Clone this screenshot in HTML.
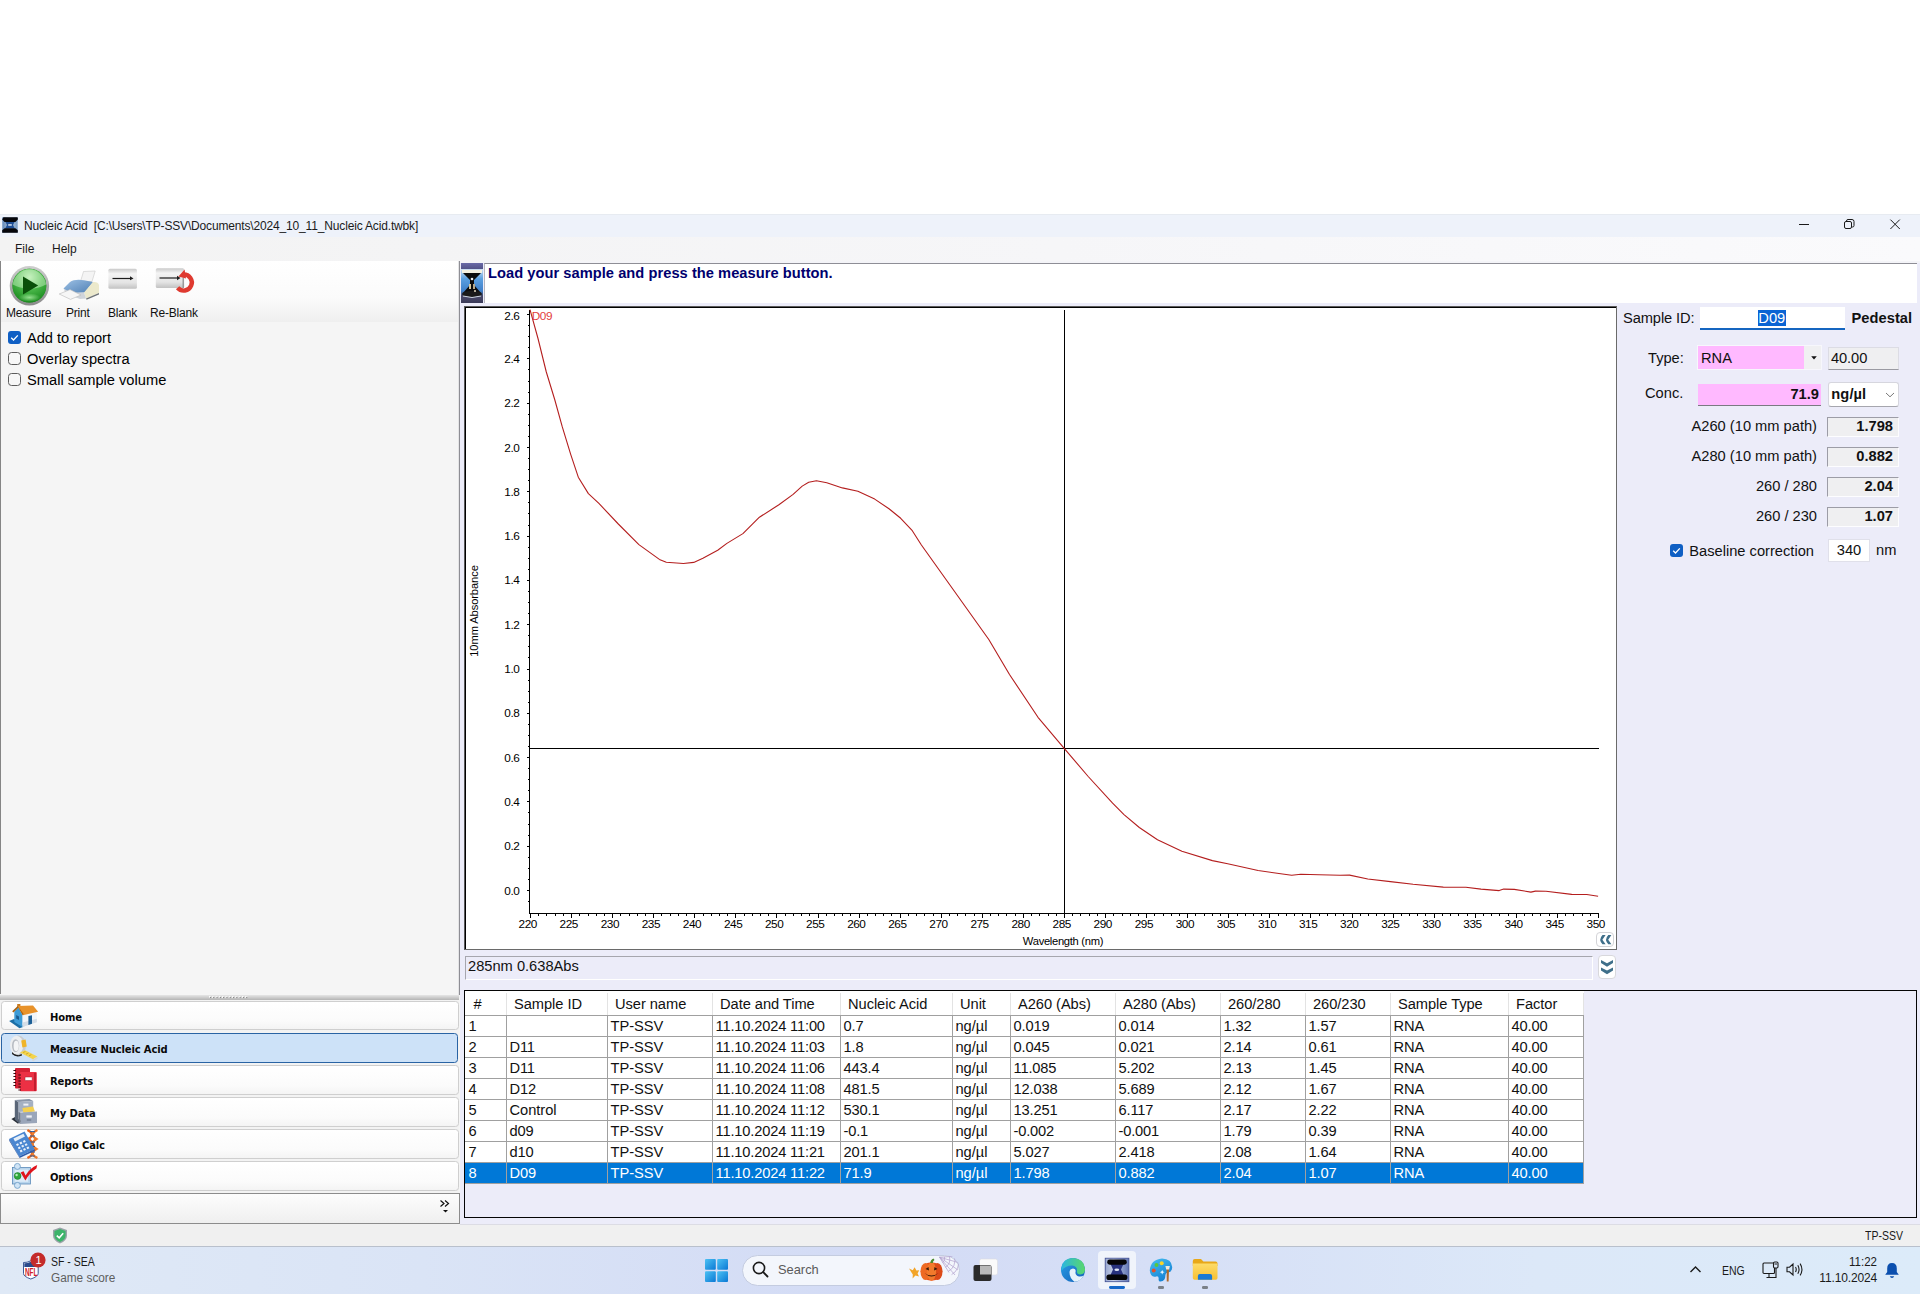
<!DOCTYPE html>
<html><head><meta charset="utf-8"><title>Nucleic Acid</title>
<style>
html,body{margin:0;padding:0;background:#fff;}
body{width:1920px;height:1312px;position:relative;overflow:hidden;font-family:"Liberation Sans",sans-serif;}
.b{position:absolute;box-sizing:border-box;}
.t{position:absolute;white-space:pre;}
svg{position:absolute;overflow:visible;}
</style></head><body>
<div class="b" style="left:0px;top:214px;width:1920px;height:23px;background:#eef2fa;border-top:1px solid #e7ebf1;"></div>
<div class="b" style="left:0px;top:237px;width:1920px;height:24px;background:linear-gradient(90deg,#f3f3f3 0%,#f4f4f5 22%,#f6f6f8 55%,#fafafc 100%);"></div>
<svg style="left:2px;top:217px" width="16" height="16" viewBox="0 0 16 16"><defs><linearGradient id="gti" x1="0" y1="0" x2="1" y2="0"><stop offset="0" stop-color="#5f86b8"/><stop offset="0.5" stop-color="#b4c8dc"/><stop offset="1" stop-color="#7a9cc4"/></linearGradient></defs><rect x="0.3" y="0.3" width="15.4" height="15.4" fill="url(#gti)"/><path d="M3.2 4.6H12.8L11 8L12.8 11.4H3.2L5 8Z" fill="#1f4f96"/><path d="M1.4 0.2H15.2Q15.8 0.2 15.8 0.9V2.6L13.4 5H2.6L0.2 2.6Z" fill="#06060a"/><path d="M2.6 11.2H13.4L15.8 13.2V15.2Q15.8 15.8 15.2 15.8H0.8Q0.2 15.8 0.2 15.2V13.2Z" fill="#06060a"/><rect x="6.2" y="7.2" width="3.6" height="1.5" fill="#dfe8f4"/></svg>
<span class="t" style="left:24px;top:218.14px;font-size:12px;line-height:16px;color:#1a1a1a;letter-spacing:-0.16px;">Nucleic Acid  [C:\Users\TP-SSV\Documents\2024_10_11_Nucleic Acid.twbk]</span>
<svg style="left:1790px;top:214px" width="130" height="23" viewBox="0 0 130 23"><g stroke="#1a1a1a" stroke-width="1" fill="none"><path d="M9 10.5H19"/><rect x="54.5" y="7.5" width="7" height="7" rx="1.5"/><path d="M56.5 7.5V7a1.5 1.5 0 0 1 1.5-1.5h4a2 2 0 0 1 2 2v4a1.5 1.5 0 0 1-1.5 1.5H62"/><path d="M100.4 5.6L109.8 15M109.8 5.6L100.4 15"/></g></svg>
<span class="t" style="left:15px;top:240.84px;font-size:12px;line-height:16px;color:#1a1a1a;">File</span>
<span class="t" style="left:52px;top:240.84px;font-size:12px;line-height:16px;color:#1a1a1a;">Help</span>
<div class="b" style="left:0px;top:261px;width:460px;height:963px;background:#f5f5f5;"></div>
<div class="b" style="left:0px;top:261px;width:460px;height:61px;background:linear-gradient(180deg,#ffffff 0%,#fbfbfb 60%,#efefef 100%);"></div>
<div class="b" style="left:0px;top:261px;width:1px;height:733px;background:#858585;"></div>
<div class="b" style="left:458px;top:261px;width:1px;height:734px;background:#e4e4e6;"></div>
<div class="b" style="left:459px;top:261px;width:1px;height:734px;background:#8e8e94;"></div>
<span class="t" style="left:6px;top:304.84px;font-size:12px;line-height:16px;color:#111;letter-spacing:-0.2px;">Measure</span>
<span class="t" style="left:66px;top:304.84px;font-size:12px;line-height:16px;color:#111;letter-spacing:-0.2px;">Print</span>
<span class="t" style="left:108px;top:304.84px;font-size:12px;line-height:16px;color:#111;letter-spacing:-0.2px;">Blank</span>
<span class="t" style="left:150px;top:304.84px;font-size:12px;line-height:16px;color:#111;letter-spacing:-0.2px;">Re-Blank</span>
<svg style="left:8px;top:331px" width="13" height="13" viewBox="0 0 13 13"><rect x="0" y="0" width="13" height="13" rx="3" fill="#0f5fc4"/><path d="M3.2 6.8L5.5 9L9.8 4.4" stroke="#fff" stroke-width="1.3" fill="none"/></svg>
<svg style="left:8px;top:352px" width="13" height="13" viewBox="0 0 13 13"><rect x="0.5" y="0.5" width="12" height="12" rx="3" fill="#f7f7f7" stroke="#5c5c5c"/></svg>
<svg style="left:8px;top:373px" width="13" height="13" viewBox="0 0 13 13"><rect x="0.5" y="0.5" width="12" height="12" rx="3" fill="#f7f7f7" stroke="#5c5c5c"/></svg>
<span class="t" style="left:27px;top:329.42px;font-size:14.67px;line-height:19px;color:#000;letter-spacing:-0.06px;">Add to report</span>
<span class="t" style="left:27px;top:350.42px;font-size:14.67px;line-height:19px;color:#000;">Overlay spectra</span>
<span class="t" style="left:27px;top:371.42px;font-size:14.67px;line-height:19px;color:#000;">Small sample volume</span>
<div class="b" style="left:460px;top:261px;width:1460px;height:963px;background:#ececf9;"></div>
<div class="b" style="left:460px;top:261px;width:1460px;height:2px;background:#f4f4f8;"></div>
<div class="b" style="left:484px;top:263px;width:1433px;height:40px;background:#fff;border-top:1px solid #8e8e96;border-left:1px solid #b5b5bd;"></div>
<div class="b" style="left:461px;top:263px;width:22px;height:40px;background:linear-gradient(180deg,#6a6aa8 0%,#54548a 14%,#cfe0f2 15%,#5a9fe0 40%,#3f7fc8 70%,#4a4a6a 82%,#3a3a58 100%);"></div>
<svg style="left:461px;top:263px" width="22" height="40" viewBox="0 0 22 40"><rect x="1" y="7" width="20" height="3" fill="#f4f0e0"/><path d="M2 10H20L13 17V22L20 30V33H2V30L9 22V17Z" fill="#0c0c0c"/><ellipse cx="11" cy="31" rx="10" ry="3.2" fill="#1a1a1a"/><rect x="8" y="21" width="2" height="5" fill="#d8c8a0"/><rect x="12" y="21" width="2" height="5" fill="#b8a888"/><circle cx="11" cy="16" r="1.3" fill="#eee"/><circle cx="14" cy="28" r="1" fill="#e8dcc0"/><path d="M2 33 Q11 36 20 33" stroke="#cfd8e4" fill="none"/></svg>
<span class="t" style="left:488px;top:263.92px;font-size:14.67px;line-height:19px;color:#00006e;font-weight:bold;letter-spacing:0.04px;">Load your sample and press the measure button.</span>
<svg style="left:0px;top:261px" width="220" height="50" viewBox="0 261 220 50">
<defs>
<radialGradient id="gplay" cx="0.5" cy="0.25" r="0.8"><stop offset="0" stop-color="#b8ecb0"/><stop offset="0.5" stop-color="#46b446"/><stop offset="1" stop-color="#138418"/></radialGradient>
<radialGradient id="gglow" cx="0.5" cy="0.5" r="0.5"><stop offset="0" stop-color="#b4f4ac" stop-opacity="0.75"/><stop offset="1" stop-color="#b4f4ac" stop-opacity="0"/></radialGradient><linearGradient id="gring" x1="0" y1="0" x2="0" y2="1"><stop offset="0" stop-color="#cfcfcf"/><stop offset="1" stop-color="#8a8a8a"/></linearGradient>
<linearGradient id="gblank" x1="0" y1="0" x2="0" y2="1"><stop offset="0" stop-color="#c9c9c9"/><stop offset="0.25" stop-color="#f4f4f4"/><stop offset="0.7" stop-color="#e4e4e4"/><stop offset="1" stop-color="#c2c2c2"/></linearGradient>
<linearGradient id="gprb" x1="0" y1="0" x2="1" y2="1"><stop offset="0" stop-color="#9cc0e4"/><stop offset="1" stop-color="#4f7fb4"/></linearGradient>
</defs>
<circle cx="29.4" cy="285.7" r="19.7" fill="url(#gring)"/>
<circle cx="29.4" cy="285.7" r="16.9" fill="#1f8a24"/>
<circle cx="29.4" cy="285.7" r="16.9" fill="url(#gplay)"/>
<path d="M12.8 284.5A16.7 16.7 0 0 1 46 284.5Q38 289 29.4 288.5Q21 289 12.8 284.5Z" fill="#d8f8d0" opacity="0.45"/>
<ellipse cx="29.4" cy="297.5" rx="11" ry="4.2" fill="url(#gglow)"/>
<path d="M23 276.6L38.2 285.6L23 294.4Z" fill="#0a4f0a"/>
<!-- printer -->
<path d="M83.5 271.5L95.2 271L92 281.5L80.5 281.5Z" fill="#f4f4f4" stroke="#c8c8c8" stroke-width="0.6"/>
<path d="M63.5 288.5L70 282Q74 279 84 280.2L93 282L85 292.5L70 293Z" fill="url(#gprb)"/>
<path d="M84 292.5L93 282Q98 281.5 99 285V293L86 298.6Z" fill="#ece9cc"/>
<path d="M86 298.6L99 293V294.6L86.6 299.8Z" fill="#6f7478"/>
<path d="M63.5 288.5L70 293L84 292.5L86 298.6L80 299L66 294Z" fill="#cfd4da"/>
<path d="M59.2 294L70 289.6L81 295L70.5 299.4Z" fill="#f6f6f6" stroke="#b8b8b8" stroke-width="0.6"/>
<!-- blank -->
<rect x="108.4" y="268.8" width="28.5" height="20" rx="1.5" fill="url(#gblank)"/>
<path d="M112.5 278.5H131" stroke="#1c1c1c" stroke-width="1.2"/><path d="M130 276.3L133.5 278.5L130 280.2Z" fill="#1c1c1c"/>
<!-- re-blank -->
<rect x="155.8" y="268.2" width="28.4" height="19.8" rx="1.5" fill="url(#gblank)"/>
<path d="M183.2 277.5V288" stroke="#8a8a8a" stroke-width="1.2"/>
<path d="M159.5 278H178" stroke="#1c1c1c" stroke-width="1.2"/><path d="M177 275.8L180.5 278L177 280.2Z" fill="#1c1c1c"/>
<path d="M183.4 274.4A8.1 8.1 0 1 1 177.6 287.8" fill="none" stroke="#df3a30" stroke-width="4.4"/>
<path d="M178.4 276.6L184.6 269.6L186 278.4Z" fill="#df3a30"/>
</svg>
<span class="t" style="left:1623px;top:309.02px;font-size:14.67px;line-height:19px;color:#111;letter-spacing:-0.1px;">Sample ID:</span>
<div class="b" style="left:1700px;top:307px;width:145px;height:22.5px;background:#fff;border-bottom:2px solid #1565c0;"></div>
<div class="b" style="left:1758px;top:309.5px;width:28px;height:16px;background:#0a64d4;"></div>
<span class="t" style="left:1758.3px;top:308.82px;font-size:14.67px;line-height:19px;color:#fff;">D09</span>
<span class="t" style="left:1851.5px;top:309.02px;font-size:14.67px;line-height:19px;color:#111;font-weight:bold;letter-spacing:0.05px;">Pedestal</span>
<span class="t" style="left:1648px;top:349.02px;font-size:14.67px;line-height:19px;color:#111;letter-spacing:0;">Type:</span>
<div class="b" style="left:1697px;top:345px;width:125px;height:25px;background:#f7f7fc;"></div>
<div class="b" style="left:1698px;top:346px;width:106px;height:23px;background:#ffb9ff;"></div>
<div class="b" style="left:1804px;top:346px;width:17px;height:23px;background:#f0f0f2;"></div>
<svg style="left:1810.5px;top:356px" width="6" height="4" viewBox="0 0 6 4"><path d="M0.2 0.3H5.8L3 3.4Z" fill="#111"/></svg>
<span class="t" style="left:1701px;top:349.02px;font-size:14.67px;line-height:19px;color:#111;letter-spacing:0;">RNA</span>
<div class="b" style="left:1828px;top:347px;width:71px;height:22.5px;background:#efeff1;border:1px solid #dcdce4;border-bottom:1px solid #9a9aa2;"></div>
<span class="t" style="left:1831px;top:349.02px;font-size:14.67px;line-height:19px;color:#111;letter-spacing:-0.1px;">40.00</span>
<span class="t" style="left:1645px;top:384.42px;font-size:14.67px;line-height:19px;color:#111;letter-spacing:0;">Conc.</span>
<div class="b" style="left:1698px;top:384px;width:122.5px;height:21.5px;background:#ffb9ff;border-bottom:1px solid #7a7a82;"></div>
<span class="t" style="left:1698px;top:384.72px;font-size:14.67px;line-height:19px;color:#111;font-weight:bold;width:121px;text-align:right;letter-spacing:0;">71.9</span>
<div class="b" style="left:1827.5px;top:381.5px;width:71px;height:25px;background:#fff;border:1px solid #d6d6de;border-bottom:1px solid #a6a6ae;border-radius:3px;"></div>
<span class="t" style="left:1831.3px;top:385.02px;font-size:14.67px;line-height:19px;color:#111;font-weight:bold;letter-spacing:0.1px;">ng/µl</span>
<svg style="left:1885px;top:392px" width="10" height="6" viewBox="0 0 10 6"><path d="M1 1L5 4.8L9 1" stroke="#6a6a6a" stroke-width="0.9" fill="none"/></svg>
<div class="b" style="left:1827px;top:417px;width:72px;height:20px;background:#efeff1;border:1px solid #9c9ca6;border-right-color:#fdfdff;border-bottom-color:#fdfdff;"></div>
<span class="t" style="left:1600px;top:417.22px;font-size:14.67px;line-height:19px;color:#111;width:217px;text-align:right;letter-spacing:0;">A260 (10 mm path)</span>
<span class="t" style="left:1827px;top:417.42px;font-size:14.67px;line-height:19px;color:#111;font-weight:bold;width:66px;text-align:right;letter-spacing:0;">1.798</span>
<div class="b" style="left:1827px;top:447px;width:72px;height:20px;background:#efeff1;border:1px solid #9c9ca6;border-right-color:#fdfdff;border-bottom-color:#fdfdff;"></div>
<span class="t" style="left:1600px;top:447.22px;font-size:14.67px;line-height:19px;color:#111;width:217px;text-align:right;letter-spacing:0;">A280 (10 mm path)</span>
<span class="t" style="left:1827px;top:447.42px;font-size:14.67px;line-height:19px;color:#111;font-weight:bold;width:66px;text-align:right;letter-spacing:0;">0.882</span>
<div class="b" style="left:1827px;top:477px;width:72px;height:20px;background:#efeff1;border:1px solid #9c9ca6;border-right-color:#fdfdff;border-bottom-color:#fdfdff;"></div>
<span class="t" style="left:1600px;top:477.22px;font-size:14.67px;line-height:19px;color:#111;width:217px;text-align:right;letter-spacing:0;">260 / 280</span>
<span class="t" style="left:1827px;top:477.42px;font-size:14.67px;line-height:19px;color:#111;font-weight:bold;width:66px;text-align:right;letter-spacing:0;">2.04</span>
<div class="b" style="left:1827px;top:507px;width:72px;height:20px;background:#efeff1;border:1px solid #9c9ca6;border-right-color:#fdfdff;border-bottom-color:#fdfdff;"></div>
<span class="t" style="left:1600px;top:507.22px;font-size:14.67px;line-height:19px;color:#111;width:217px;text-align:right;letter-spacing:0;">260 / 230</span>
<span class="t" style="left:1827px;top:507.42px;font-size:14.67px;line-height:19px;color:#111;font-weight:bold;width:66px;text-align:right;letter-spacing:0;">1.07</span>
<svg style="left:1670px;top:544px" width="13" height="13" viewBox="0 0 13 13"><rect x="0" y="0" width="13" height="13" rx="3" fill="#0f5fc4"/><path d="M3.2 6.8L5.5 9L9.8 4.4" stroke="#fff" stroke-width="1.3" fill="none"/></svg>
<span class="t" style="left:1689.3px;top:542.02px;font-size:14.67px;line-height:19px;color:#111;letter-spacing:0;">Baseline correction</span>
<div class="b" style="left:1828px;top:539px;width:42px;height:23px;background:#fff;border:1px solid #e0e0ea;"></div>
<span class="t" style="left:1828px;top:541.12px;font-size:14.67px;line-height:19px;color:#111;width:42px;text-align:center;letter-spacing:0;">340</span>
<span class="t" style="left:1876px;top:541.12px;font-size:14.67px;line-height:19px;color:#111;letter-spacing:0;">nm</span>
<div class="b" style="left:464px;top:306px;width:1153px;height:644px;background:#000;border-top:1px solid #5a5a5a;border-left:1px solid #5a5a5a;border-right:1px solid #6a6a6a;border-bottom:1px solid #6a6a6a;"></div>
<div class="b" style="left:466px;top:308px;width:1150px;height:641px;background:#fff;"></div>
<svg style="left:0;top:0" width="1920" height="1312" viewBox="0 0 1920 1312" shape-rendering="crispEdges"><g stroke="#000" stroke-width="1" fill="none"><path d="M529.5 310V913.5H1599"/><path d="M527.5 901.5H529M526.5 890.5H529M527.5 879.5H529M527.5 868.5H529M527.5 857.5H529M526.5 846.5H529M527.5 835.5H529M527.5 824.5H529M527.5 812.5H529M526.5 801.5H529M527.5 790.5H529M527.5 779.5H529M527.5 768.5H529M526.5 757.5H529M527.5 746.5H529M527.5 735.5H529M527.5 724.5H529M526.5 713.5H529M527.5 702.5H529M527.5 691.5H529M527.5 680.5H529M526.5 669.5H529M527.5 657.5H529M527.5 646.5H529M527.5 635.5H529M526.5 624.5H529M527.5 613.5H529M527.5 602.5H529M527.5 591.5H529M526.5 580.5H529M527.5 569.5H529M527.5 558.5H529M527.5 547.5H529M526.5 536.5H529M527.5 525.5H529M527.5 513.5H529M527.5 502.5H529M526.5 491.5H529M527.5 480.5H529M527.5 469.5H529M527.5 458.5H529M526.5 447.5H529M527.5 436.5H529M527.5 425.5H529M527.5 414.5H529M526.5 403.5H529M527.5 392.5H529M527.5 381.5H529M527.5 369.5H529M526.5 358.5H529M527.5 347.5H529M527.5 336.5H529M527.5 325.5H529M526.5 314.5H529"/><path d="M530.5 913V918M538.5 913V916M546.5 913V916M555.5 913V916M563.5 913V916M571.5 913V918M579.5 913V916M588.5 913V916M596.5 913V916M604.5 913V916M612.5 913V918M620.5 913V916M629.5 913V916M637.5 913V916M645.5 913V916M653.5 913V918M661.5 913V916M670.5 913V916M678.5 913V916M686.5 913V916M694.5 913V918M703.5 913V916M711.5 913V916M719.5 913V916M727.5 913V916M735.5 913V918M744.5 913V916M752.5 913V916M760.5 913V916M768.5 913V916M776.5 913V918M785.5 913V916M793.5 913V916M801.5 913V916M809.5 913V916M818.5 913V918M826.5 913V916M834.5 913V916M842.5 913V916M850.5 913V916M859.5 913V918M867.5 913V916M875.5 913V916M883.5 913V916M891.5 913V916M900.5 913V918M908.5 913V916M916.5 913V916M924.5 913V916M933.5 913V916M941.5 913V918M949.5 913V916M957.5 913V916M965.5 913V916M974.5 913V916M982.5 913V918M990.5 913V916M998.5 913V916M1006.5 913V916M1015.5 913V916M1023.5 913V918M1031.5 913V916M1039.5 913V916M1048.5 913V916M1056.5 913V916M1064.5 913V918M1072.5 913V916M1080.5 913V916M1089.5 913V916M1097.5 913V916M1105.5 913V918M1113.5 913V916M1122.5 913V916M1130.5 913V916M1138.5 913V916M1146.5 913V918M1154.5 913V916M1163.5 913V916M1171.5 913V916M1179.5 913V916M1187.5 913V918M1195.5 913V916M1204.5 913V916M1212.5 913V916M1220.5 913V916M1228.5 913V918M1237.5 913V916M1245.5 913V916M1253.5 913V916M1261.5 913V916M1269.5 913V918M1278.5 913V916M1286.5 913V916M1294.5 913V916M1302.5 913V916M1310.5 913V918M1319.5 913V916M1327.5 913V916M1335.5 913V916M1343.5 913V916M1352.5 913V918M1360.5 913V916M1368.5 913V916M1376.5 913V916M1384.5 913V916M1393.5 913V918M1401.5 913V916M1409.5 913V916M1417.5 913V916M1425.5 913V916M1434.5 913V918M1442.5 913V916M1450.5 913V916M1458.5 913V916M1467.5 913V916M1475.5 913V918M1483.5 913V916M1491.5 913V916M1499.5 913V916M1508.5 913V916M1516.5 913V918M1524.5 913V916M1532.5 913V916M1540.5 913V916M1549.5 913V916M1557.5 913V918M1565.5 913V916M1573.5 913V916M1582.5 913V916M1590.5 913V916M1598.5 913V918"/><path d="M1064.5 310V913M530 748.5H1599"/></g></svg>
<svg style="left:0;top:0" width="1920" height="1312" viewBox="0 0 1920 1312"><path d="M530.0 309.6 L538.0 338.5 L546.3 372.0 L554.7 399.5 L562.3 426.9 L570.7 454.3 L578.3 477.2 L588.4 493.6 L598.9 503.4 L618.3 524.0 L638.9 544.6 L659.4 559.4 L666.3 562.2 L683.4 563.5 L693.7 562.4 L702.9 558.3 L717.7 550.3 L726.9 543.4 L742.9 533.6 L759.4 517.2 L778.9 504.8 L793.1 494.4 L802.2 486.1 L808.7 482.2 L816.4 480.7 L826.8 482.8 L842.4 487.9 L857.9 491.3 L874.7 499.1 L889.0 508.7 L900.7 518.3 L912.3 530.7 L921.4 545.0 L988.8 639.5 L1009.5 674.5 L1038.0 717.3 L1064.4 748.6 L1088.2 776.5 L1112.6 803.2 L1124.0 814.6 L1139.3 827.5 L1157.5 839.7 L1181.9 851.2 L1212.4 860.6 L1227.7 863.7 L1258.1 870.5 L1282.5 874.0 L1291.7 875.3 L1300.8 874.2 L1319.1 874.8 L1340.0 875.3 L1349.6 875.1 L1367.8 879.0 L1390.4 881.6 L1413.1 884.3 L1443.3 887.1 L1465.9 887.3 L1481.0 889.1 L1499.2 890.6 L1503.7 889.1 L1514.3 889.4 L1530.9 892.1 L1535.4 891.1 L1546.0 891.2 L1571.7 894.4 L1586.8 894.5 L1598.1 896.2" stroke="#b41e1e" stroke-width="1.1" fill="none" stroke-linejoin="round"/></svg>
<span class="t" style="left:489.4px;top:883.51px;font-size:11.8px;line-height:15px;color:#000;width:30px;text-align:right;letter-spacing:-0.45px;">0.0</span>
<span class="t" style="left:489.4px;top:839.21px;font-size:11.8px;line-height:15px;color:#000;width:30px;text-align:right;letter-spacing:-0.45px;">0.2</span>
<span class="t" style="left:489.4px;top:794.91px;font-size:11.8px;line-height:15px;color:#000;width:30px;text-align:right;letter-spacing:-0.45px;">0.4</span>
<span class="t" style="left:489.4px;top:750.61px;font-size:11.8px;line-height:15px;color:#000;width:30px;text-align:right;letter-spacing:-0.45px;">0.6</span>
<span class="t" style="left:489.4px;top:706.31px;font-size:11.8px;line-height:15px;color:#000;width:30px;text-align:right;letter-spacing:-0.45px;">0.8</span>
<span class="t" style="left:489.4px;top:662.01px;font-size:11.8px;line-height:15px;color:#000;width:30px;text-align:right;letter-spacing:-0.45px;">1.0</span>
<span class="t" style="left:489.4px;top:617.71px;font-size:11.8px;line-height:15px;color:#000;width:30px;text-align:right;letter-spacing:-0.45px;">1.2</span>
<span class="t" style="left:489.4px;top:573.41px;font-size:11.8px;line-height:15px;color:#000;width:30px;text-align:right;letter-spacing:-0.45px;">1.4</span>
<span class="t" style="left:489.4px;top:529.11px;font-size:11.8px;line-height:15px;color:#000;width:30px;text-align:right;letter-spacing:-0.45px;">1.6</span>
<span class="t" style="left:489.4px;top:484.81px;font-size:11.8px;line-height:15px;color:#000;width:30px;text-align:right;letter-spacing:-0.45px;">1.8</span>
<span class="t" style="left:489.4px;top:440.51px;font-size:11.8px;line-height:15px;color:#000;width:30px;text-align:right;letter-spacing:-0.45px;">2.0</span>
<span class="t" style="left:489.4px;top:396.21px;font-size:11.8px;line-height:15px;color:#000;width:30px;text-align:right;letter-spacing:-0.45px;">2.2</span>
<span class="t" style="left:489.4px;top:351.91px;font-size:11.8px;line-height:15px;color:#000;width:30px;text-align:right;letter-spacing:-0.45px;">2.4</span>
<span class="t" style="left:489.4px;top:309.21px;font-size:11.8px;line-height:15px;color:#000;width:30px;text-align:right;letter-spacing:-0.45px;">2.6</span>
<span class="t" style="left:507.70000000000005px;top:916.91px;font-size:11.8px;line-height:15px;color:#000;width:40px;text-align:center;letter-spacing:-0.45px;">220</span>
<span class="t" style="left:548.777px;top:916.91px;font-size:11.8px;line-height:15px;color:#000;width:40px;text-align:center;letter-spacing:-0.45px;">225</span>
<span class="t" style="left:589.854px;top:916.91px;font-size:11.8px;line-height:15px;color:#000;width:40px;text-align:center;letter-spacing:-0.45px;">230</span>
<span class="t" style="left:630.931px;top:916.91px;font-size:11.8px;line-height:15px;color:#000;width:40px;text-align:center;letter-spacing:-0.45px;">235</span>
<span class="t" style="left:672.008px;top:916.91px;font-size:11.8px;line-height:15px;color:#000;width:40px;text-align:center;letter-spacing:-0.45px;">240</span>
<span class="t" style="left:713.085px;top:916.91px;font-size:11.8px;line-height:15px;color:#000;width:40px;text-align:center;letter-spacing:-0.45px;">245</span>
<span class="t" style="left:754.162px;top:916.91px;font-size:11.8px;line-height:15px;color:#000;width:40px;text-align:center;letter-spacing:-0.45px;">250</span>
<span class="t" style="left:795.239px;top:916.91px;font-size:11.8px;line-height:15px;color:#000;width:40px;text-align:center;letter-spacing:-0.45px;">255</span>
<span class="t" style="left:836.316px;top:916.91px;font-size:11.8px;line-height:15px;color:#000;width:40px;text-align:center;letter-spacing:-0.45px;">260</span>
<span class="t" style="left:877.393px;top:916.91px;font-size:11.8px;line-height:15px;color:#000;width:40px;text-align:center;letter-spacing:-0.45px;">265</span>
<span class="t" style="left:918.47px;top:916.91px;font-size:11.8px;line-height:15px;color:#000;width:40px;text-align:center;letter-spacing:-0.45px;">270</span>
<span class="t" style="left:959.547px;top:916.91px;font-size:11.8px;line-height:15px;color:#000;width:40px;text-align:center;letter-spacing:-0.45px;">275</span>
<span class="t" style="left:1000.624px;top:916.91px;font-size:11.8px;line-height:15px;color:#000;width:40px;text-align:center;letter-spacing:-0.45px;">280</span>
<span class="t" style="left:1041.7010000000002px;top:916.91px;font-size:11.8px;line-height:15px;color:#000;width:40px;text-align:center;letter-spacing:-0.45px;">285</span>
<span class="t" style="left:1082.778px;top:916.91px;font-size:11.8px;line-height:15px;color:#000;width:40px;text-align:center;letter-spacing:-0.45px;">290</span>
<span class="t" style="left:1123.8550000000002px;top:916.91px;font-size:11.8px;line-height:15px;color:#000;width:40px;text-align:center;letter-spacing:-0.45px;">295</span>
<span class="t" style="left:1164.932px;top:916.91px;font-size:11.8px;line-height:15px;color:#000;width:40px;text-align:center;letter-spacing:-0.45px;">300</span>
<span class="t" style="left:1206.0090000000002px;top:916.91px;font-size:11.8px;line-height:15px;color:#000;width:40px;text-align:center;letter-spacing:-0.45px;">305</span>
<span class="t" style="left:1247.086px;top:916.91px;font-size:11.8px;line-height:15px;color:#000;width:40px;text-align:center;letter-spacing:-0.45px;">310</span>
<span class="t" style="left:1288.1630000000002px;top:916.91px;font-size:11.8px;line-height:15px;color:#000;width:40px;text-align:center;letter-spacing:-0.45px;">315</span>
<span class="t" style="left:1329.24px;top:916.91px;font-size:11.8px;line-height:15px;color:#000;width:40px;text-align:center;letter-spacing:-0.45px;">320</span>
<span class="t" style="left:1370.3170000000002px;top:916.91px;font-size:11.8px;line-height:15px;color:#000;width:40px;text-align:center;letter-spacing:-0.45px;">325</span>
<span class="t" style="left:1411.394px;top:916.91px;font-size:11.8px;line-height:15px;color:#000;width:40px;text-align:center;letter-spacing:-0.45px;">330</span>
<span class="t" style="left:1452.4710000000002px;top:916.91px;font-size:11.8px;line-height:15px;color:#000;width:40px;text-align:center;letter-spacing:-0.45px;">335</span>
<span class="t" style="left:1493.548px;top:916.91px;font-size:11.8px;line-height:15px;color:#000;width:40px;text-align:center;letter-spacing:-0.45px;">340</span>
<span class="t" style="left:1534.6250000000002px;top:916.91px;font-size:11.8px;line-height:15px;color:#000;width:40px;text-align:center;letter-spacing:-0.45px;">345</span>
<span class="t" style="left:1575.7020000000002px;top:916.91px;font-size:11.8px;line-height:15px;color:#000;width:40px;text-align:center;letter-spacing:-0.45px;">350</span>
<span class="t" style="left:1003px;top:933.62px;font-size:11.2px;line-height:15px;color:#000;width:120px;text-align:center;letter-spacing:-0.3px;">Wavelength (nm)</span>
<span class="t" style="left:474px;top:611px;font-size:11.2px;line-height:14px;letter-spacing:-0.12px;transform:translate(-50%,-50%) rotate(-90deg);color:#000;">10mm Absorbance</span>
<span class="t" style="left:531.8px;top:309.11px;font-size:11.8px;line-height:15px;color:#e23c3c;letter-spacing:-0.45px;">D09</span>
<div class="b" style="left:1596px;top:932px;width:18px;height:15px;background:#fff;border:1px solid #d4d4d8;border-radius:4px;"></div>
<svg style="left:1599px;top:934.6px" width="14" height="10" viewBox="0 0 14 10"><path d="M6.6000000000000005 0L3.5 0Q-1.0 4.65 3.5 9.3L6.6000000000000005 9.3L3.4000000000000004 4.65Z M12.4 0L9.3 0Q4.8 4.65 9.3 9.3L12.4 9.3L9.2 4.65Z" fill="#3f6f8a"/></svg>
<div class="b" style="left:465px;top:956px;width:1128px;height:24px;background:#ececf9;border-top:1px solid #a6a6ae;border-left:1px solid #a6a6ae;border-bottom:1px solid #fff;border-right:1px solid #fff;"></div>
<span class="t" style="left:468px;top:956.92px;font-size:14.67px;line-height:19px;color:#111;">285nm 0.638Abs</span>
<div class="b" style="left:1598px;top:955px;width:18px;height:24px;background:#fff;border:1px solid #d8d8dc;border-radius:4px;"></div>
<svg style="left:1600px;top:959px" width="14" height="16" viewBox="0 0 14 16"><path d="M1 1L7 4.2L13 1V4L7 7.8L1 4Z M1 8.4L7 11.6L13 8.4V11.4L7 15.2L1 11.4Z" fill="#3f6f8a"/></svg>
<div class="b" style="left:464px;top:990px;width:1453px;height:228px;background:#ececf9;border:1px solid #050505;"></div>
<div class="b" style="left:465px;top:991px;width:1119px;height:25px;background:#fff;border-bottom:1px solid #a0a0a0;"></div>
<div class="b" style="left:465px;top:1016px;width:1119px;height:168px;background:#fff;"></div>
<div class="b" style="left:465px;top:1163px;width:1119px;height:21px;background:#0078d7;"></div>
<div class="b" style="left:465px;top:1036px;width:1119px;height:1px;background:#a0a0a0;"></div>
<div class="b" style="left:465px;top:1057px;width:1119px;height:1px;background:#a0a0a0;"></div>
<div class="b" style="left:465px;top:1078px;width:1119px;height:1px;background:#a0a0a0;"></div>
<div class="b" style="left:465px;top:1099px;width:1119px;height:1px;background:#a0a0a0;"></div>
<div class="b" style="left:465px;top:1120px;width:1119px;height:1px;background:#a0a0a0;"></div>
<div class="b" style="left:465px;top:1141px;width:1119px;height:1px;background:#a0a0a0;"></div>
<div class="b" style="left:465px;top:1162px;width:1119px;height:1px;background:#a0a0a0;"></div>
<div class="b" style="left:465px;top:1183px;width:1119px;height:1px;background:#a0a0a0;"></div>
<div class="b" style="left:506px;top:993px;width:1px;height:22px;background:#e3e3e3;"></div>
<div class="b" style="left:506px;top:1016px;width:1px;height:168px;background:#a0a0a0;"></div>
<div class="b" style="left:607px;top:993px;width:1px;height:22px;background:#e3e3e3;"></div>
<div class="b" style="left:607px;top:1016px;width:1px;height:168px;background:#a0a0a0;"></div>
<div class="b" style="left:712px;top:993px;width:1px;height:22px;background:#e3e3e3;"></div>
<div class="b" style="left:712px;top:1016px;width:1px;height:168px;background:#a0a0a0;"></div>
<div class="b" style="left:840px;top:993px;width:1px;height:22px;background:#e3e3e3;"></div>
<div class="b" style="left:840px;top:1016px;width:1px;height:168px;background:#a0a0a0;"></div>
<div class="b" style="left:952px;top:993px;width:1px;height:22px;background:#e3e3e3;"></div>
<div class="b" style="left:952px;top:1016px;width:1px;height:168px;background:#a0a0a0;"></div>
<div class="b" style="left:1010px;top:993px;width:1px;height:22px;background:#e3e3e3;"></div>
<div class="b" style="left:1010px;top:1016px;width:1px;height:168px;background:#a0a0a0;"></div>
<div class="b" style="left:1115px;top:993px;width:1px;height:22px;background:#e3e3e3;"></div>
<div class="b" style="left:1115px;top:1016px;width:1px;height:168px;background:#a0a0a0;"></div>
<div class="b" style="left:1220px;top:993px;width:1px;height:22px;background:#e3e3e3;"></div>
<div class="b" style="left:1220px;top:1016px;width:1px;height:168px;background:#a0a0a0;"></div>
<div class="b" style="left:1305px;top:993px;width:1px;height:22px;background:#e3e3e3;"></div>
<div class="b" style="left:1305px;top:1016px;width:1px;height:168px;background:#a0a0a0;"></div>
<div class="b" style="left:1390px;top:993px;width:1px;height:22px;background:#e3e3e3;"></div>
<div class="b" style="left:1390px;top:1016px;width:1px;height:168px;background:#a0a0a0;"></div>
<div class="b" style="left:1508px;top:993px;width:1px;height:22px;background:#e3e3e3;"></div>
<div class="b" style="left:1508px;top:1016px;width:1px;height:168px;background:#a0a0a0;"></div>
<div class="b" style="left:1583px;top:993px;width:1px;height:22px;background:#e3e3e3;"></div>
<div class="b" style="left:1583px;top:1016px;width:1px;height:168px;background:#a0a0a0;"></div>
<span class="t" style="left:473.6px;top:994.62px;font-size:14.67px;line-height:19px;color:#111;letter-spacing:-0.05px;">#</span>
<span class="t" style="left:514px;top:994.62px;font-size:14.67px;line-height:19px;color:#111;letter-spacing:-0.05px;">Sample ID</span>
<span class="t" style="left:615px;top:994.62px;font-size:14.67px;line-height:19px;color:#111;letter-spacing:-0.05px;">User name</span>
<span class="t" style="left:720px;top:994.62px;font-size:14.67px;line-height:19px;color:#111;letter-spacing:-0.05px;">Date and Time</span>
<span class="t" style="left:848px;top:994.62px;font-size:14.67px;line-height:19px;color:#111;letter-spacing:-0.05px;">Nucleic Acid</span>
<span class="t" style="left:960px;top:994.62px;font-size:14.67px;line-height:19px;color:#111;letter-spacing:-0.05px;">Unit</span>
<span class="t" style="left:1018px;top:994.62px;font-size:14.67px;line-height:19px;color:#111;letter-spacing:-0.05px;">A260 (Abs)</span>
<span class="t" style="left:1123px;top:994.62px;font-size:14.67px;line-height:19px;color:#111;letter-spacing:-0.05px;">A280 (Abs)</span>
<span class="t" style="left:1228px;top:994.62px;font-size:14.67px;line-height:19px;color:#111;letter-spacing:-0.05px;">260/280</span>
<span class="t" style="left:1313px;top:994.62px;font-size:14.67px;line-height:19px;color:#111;letter-spacing:-0.05px;">260/230</span>
<span class="t" style="left:1398px;top:994.62px;font-size:14.67px;line-height:19px;color:#111;letter-spacing:-0.05px;">Sample Type</span>
<span class="t" style="left:1516px;top:994.62px;font-size:14.67px;line-height:19px;color:#111;letter-spacing:-0.05px;">Factor</span>
<span class="t" style="left:468.4px;top:1017.42px;font-size:14.67px;line-height:19px;color:#111;letter-spacing:-0.16px;">1</span>
<span class="t" style="left:610.5px;top:1017.42px;font-size:14.67px;line-height:19px;color:#111;letter-spacing:-0.04px;">TP-SSV</span>
<span class="t" style="left:715.5px;top:1017.42px;font-size:14.67px;line-height:19px;color:#111;letter-spacing:-0.16px;">11.10.2024 11:00</span>
<span class="t" style="left:843.5px;top:1017.42px;font-size:14.67px;line-height:19px;color:#111;letter-spacing:-0.16px;">0.7</span>
<span class="t" style="left:955.5px;top:1017.42px;font-size:14.67px;line-height:19px;color:#111;letter-spacing:-0.04px;">ng/µl</span>
<span class="t" style="left:1013.5px;top:1017.42px;font-size:14.67px;line-height:19px;color:#111;letter-spacing:-0.16px;">0.019</span>
<span class="t" style="left:1118.5px;top:1017.42px;font-size:14.67px;line-height:19px;color:#111;letter-spacing:-0.16px;">0.014</span>
<span class="t" style="left:1223.5px;top:1017.42px;font-size:14.67px;line-height:19px;color:#111;letter-spacing:-0.16px;">1.32</span>
<span class="t" style="left:1308.5px;top:1017.42px;font-size:14.67px;line-height:19px;color:#111;letter-spacing:-0.16px;">1.57</span>
<span class="t" style="left:1393.5px;top:1017.42px;font-size:14.67px;line-height:19px;color:#111;letter-spacing:-0.04px;">RNA</span>
<span class="t" style="left:1511.5px;top:1017.42px;font-size:14.67px;line-height:19px;color:#111;letter-spacing:-0.16px;">40.00</span>
<span class="t" style="left:468.4px;top:1038.42px;font-size:14.67px;line-height:19px;color:#111;letter-spacing:-0.16px;">2</span>
<span class="t" style="left:509.5px;top:1038.42px;font-size:14.67px;line-height:19px;color:#111;letter-spacing:-0.16px;">D11</span>
<span class="t" style="left:610.5px;top:1038.42px;font-size:14.67px;line-height:19px;color:#111;letter-spacing:-0.04px;">TP-SSV</span>
<span class="t" style="left:715.5px;top:1038.42px;font-size:14.67px;line-height:19px;color:#111;letter-spacing:-0.16px;">11.10.2024 11:03</span>
<span class="t" style="left:843.5px;top:1038.42px;font-size:14.67px;line-height:19px;color:#111;letter-spacing:-0.16px;">1.8</span>
<span class="t" style="left:955.5px;top:1038.42px;font-size:14.67px;line-height:19px;color:#111;letter-spacing:-0.04px;">ng/µl</span>
<span class="t" style="left:1013.5px;top:1038.42px;font-size:14.67px;line-height:19px;color:#111;letter-spacing:-0.16px;">0.045</span>
<span class="t" style="left:1118.5px;top:1038.42px;font-size:14.67px;line-height:19px;color:#111;letter-spacing:-0.16px;">0.021</span>
<span class="t" style="left:1223.5px;top:1038.42px;font-size:14.67px;line-height:19px;color:#111;letter-spacing:-0.16px;">2.14</span>
<span class="t" style="left:1308.5px;top:1038.42px;font-size:14.67px;line-height:19px;color:#111;letter-spacing:-0.16px;">0.61</span>
<span class="t" style="left:1393.5px;top:1038.42px;font-size:14.67px;line-height:19px;color:#111;letter-spacing:-0.04px;">RNA</span>
<span class="t" style="left:1511.5px;top:1038.42px;font-size:14.67px;line-height:19px;color:#111;letter-spacing:-0.16px;">40.00</span>
<span class="t" style="left:468.4px;top:1059.42px;font-size:14.67px;line-height:19px;color:#111;letter-spacing:-0.16px;">3</span>
<span class="t" style="left:509.5px;top:1059.42px;font-size:14.67px;line-height:19px;color:#111;letter-spacing:-0.16px;">D11</span>
<span class="t" style="left:610.5px;top:1059.42px;font-size:14.67px;line-height:19px;color:#111;letter-spacing:-0.04px;">TP-SSV</span>
<span class="t" style="left:715.5px;top:1059.42px;font-size:14.67px;line-height:19px;color:#111;letter-spacing:-0.16px;">11.10.2024 11:06</span>
<span class="t" style="left:843.5px;top:1059.42px;font-size:14.67px;line-height:19px;color:#111;letter-spacing:-0.16px;">443.4</span>
<span class="t" style="left:955.5px;top:1059.42px;font-size:14.67px;line-height:19px;color:#111;letter-spacing:-0.04px;">ng/µl</span>
<span class="t" style="left:1013.5px;top:1059.42px;font-size:14.67px;line-height:19px;color:#111;letter-spacing:-0.16px;">11.085</span>
<span class="t" style="left:1118.5px;top:1059.42px;font-size:14.67px;line-height:19px;color:#111;letter-spacing:-0.16px;">5.202</span>
<span class="t" style="left:1223.5px;top:1059.42px;font-size:14.67px;line-height:19px;color:#111;letter-spacing:-0.16px;">2.13</span>
<span class="t" style="left:1308.5px;top:1059.42px;font-size:14.67px;line-height:19px;color:#111;letter-spacing:-0.16px;">1.45</span>
<span class="t" style="left:1393.5px;top:1059.42px;font-size:14.67px;line-height:19px;color:#111;letter-spacing:-0.04px;">RNA</span>
<span class="t" style="left:1511.5px;top:1059.42px;font-size:14.67px;line-height:19px;color:#111;letter-spacing:-0.16px;">40.00</span>
<span class="t" style="left:468.4px;top:1080.42px;font-size:14.67px;line-height:19px;color:#111;letter-spacing:-0.16px;">4</span>
<span class="t" style="left:509.5px;top:1080.42px;font-size:14.67px;line-height:19px;color:#111;letter-spacing:-0.16px;">D12</span>
<span class="t" style="left:610.5px;top:1080.42px;font-size:14.67px;line-height:19px;color:#111;letter-spacing:-0.04px;">TP-SSV</span>
<span class="t" style="left:715.5px;top:1080.42px;font-size:14.67px;line-height:19px;color:#111;letter-spacing:-0.16px;">11.10.2024 11:08</span>
<span class="t" style="left:843.5px;top:1080.42px;font-size:14.67px;line-height:19px;color:#111;letter-spacing:-0.16px;">481.5</span>
<span class="t" style="left:955.5px;top:1080.42px;font-size:14.67px;line-height:19px;color:#111;letter-spacing:-0.04px;">ng/µl</span>
<span class="t" style="left:1013.5px;top:1080.42px;font-size:14.67px;line-height:19px;color:#111;letter-spacing:-0.16px;">12.038</span>
<span class="t" style="left:1118.5px;top:1080.42px;font-size:14.67px;line-height:19px;color:#111;letter-spacing:-0.16px;">5.689</span>
<span class="t" style="left:1223.5px;top:1080.42px;font-size:14.67px;line-height:19px;color:#111;letter-spacing:-0.16px;">2.12</span>
<span class="t" style="left:1308.5px;top:1080.42px;font-size:14.67px;line-height:19px;color:#111;letter-spacing:-0.16px;">1.67</span>
<span class="t" style="left:1393.5px;top:1080.42px;font-size:14.67px;line-height:19px;color:#111;letter-spacing:-0.04px;">RNA</span>
<span class="t" style="left:1511.5px;top:1080.42px;font-size:14.67px;line-height:19px;color:#111;letter-spacing:-0.16px;">40.00</span>
<span class="t" style="left:468.4px;top:1101.42px;font-size:14.67px;line-height:19px;color:#111;letter-spacing:-0.16px;">5</span>
<span class="t" style="left:509.5px;top:1101.42px;font-size:14.67px;line-height:19px;color:#111;letter-spacing:-0.04px;">Control</span>
<span class="t" style="left:610.5px;top:1101.42px;font-size:14.67px;line-height:19px;color:#111;letter-spacing:-0.04px;">TP-SSV</span>
<span class="t" style="left:715.5px;top:1101.42px;font-size:14.67px;line-height:19px;color:#111;letter-spacing:-0.16px;">11.10.2024 11:12</span>
<span class="t" style="left:843.5px;top:1101.42px;font-size:14.67px;line-height:19px;color:#111;letter-spacing:-0.16px;">530.1</span>
<span class="t" style="left:955.5px;top:1101.42px;font-size:14.67px;line-height:19px;color:#111;letter-spacing:-0.04px;">ng/µl</span>
<span class="t" style="left:1013.5px;top:1101.42px;font-size:14.67px;line-height:19px;color:#111;letter-spacing:-0.16px;">13.251</span>
<span class="t" style="left:1118.5px;top:1101.42px;font-size:14.67px;line-height:19px;color:#111;letter-spacing:-0.16px;">6.117</span>
<span class="t" style="left:1223.5px;top:1101.42px;font-size:14.67px;line-height:19px;color:#111;letter-spacing:-0.16px;">2.17</span>
<span class="t" style="left:1308.5px;top:1101.42px;font-size:14.67px;line-height:19px;color:#111;letter-spacing:-0.16px;">2.22</span>
<span class="t" style="left:1393.5px;top:1101.42px;font-size:14.67px;line-height:19px;color:#111;letter-spacing:-0.04px;">RNA</span>
<span class="t" style="left:1511.5px;top:1101.42px;font-size:14.67px;line-height:19px;color:#111;letter-spacing:-0.16px;">40.00</span>
<span class="t" style="left:468.4px;top:1122.42px;font-size:14.67px;line-height:19px;color:#111;letter-spacing:-0.16px;">6</span>
<span class="t" style="left:509.5px;top:1122.42px;font-size:14.67px;line-height:19px;color:#111;letter-spacing:-0.16px;">d09</span>
<span class="t" style="left:610.5px;top:1122.42px;font-size:14.67px;line-height:19px;color:#111;letter-spacing:-0.04px;">TP-SSV</span>
<span class="t" style="left:715.5px;top:1122.42px;font-size:14.67px;line-height:19px;color:#111;letter-spacing:-0.16px;">11.10.2024 11:19</span>
<span class="t" style="left:843.5px;top:1122.42px;font-size:14.67px;line-height:19px;color:#111;letter-spacing:-0.16px;">-0.1</span>
<span class="t" style="left:955.5px;top:1122.42px;font-size:14.67px;line-height:19px;color:#111;letter-spacing:-0.04px;">ng/µl</span>
<span class="t" style="left:1013.5px;top:1122.42px;font-size:14.67px;line-height:19px;color:#111;letter-spacing:-0.16px;">-0.002</span>
<span class="t" style="left:1118.5px;top:1122.42px;font-size:14.67px;line-height:19px;color:#111;letter-spacing:-0.16px;">-0.001</span>
<span class="t" style="left:1223.5px;top:1122.42px;font-size:14.67px;line-height:19px;color:#111;letter-spacing:-0.16px;">1.79</span>
<span class="t" style="left:1308.5px;top:1122.42px;font-size:14.67px;line-height:19px;color:#111;letter-spacing:-0.16px;">0.39</span>
<span class="t" style="left:1393.5px;top:1122.42px;font-size:14.67px;line-height:19px;color:#111;letter-spacing:-0.04px;">RNA</span>
<span class="t" style="left:1511.5px;top:1122.42px;font-size:14.67px;line-height:19px;color:#111;letter-spacing:-0.16px;">40.00</span>
<span class="t" style="left:468.4px;top:1143.42px;font-size:14.67px;line-height:19px;color:#111;letter-spacing:-0.16px;">7</span>
<span class="t" style="left:509.5px;top:1143.42px;font-size:14.67px;line-height:19px;color:#111;letter-spacing:-0.16px;">d10</span>
<span class="t" style="left:610.5px;top:1143.42px;font-size:14.67px;line-height:19px;color:#111;letter-spacing:-0.04px;">TP-SSV</span>
<span class="t" style="left:715.5px;top:1143.42px;font-size:14.67px;line-height:19px;color:#111;letter-spacing:-0.16px;">11.10.2024 11:21</span>
<span class="t" style="left:843.5px;top:1143.42px;font-size:14.67px;line-height:19px;color:#111;letter-spacing:-0.16px;">201.1</span>
<span class="t" style="left:955.5px;top:1143.42px;font-size:14.67px;line-height:19px;color:#111;letter-spacing:-0.04px;">ng/µl</span>
<span class="t" style="left:1013.5px;top:1143.42px;font-size:14.67px;line-height:19px;color:#111;letter-spacing:-0.16px;">5.027</span>
<span class="t" style="left:1118.5px;top:1143.42px;font-size:14.67px;line-height:19px;color:#111;letter-spacing:-0.16px;">2.418</span>
<span class="t" style="left:1223.5px;top:1143.42px;font-size:14.67px;line-height:19px;color:#111;letter-spacing:-0.16px;">2.08</span>
<span class="t" style="left:1308.5px;top:1143.42px;font-size:14.67px;line-height:19px;color:#111;letter-spacing:-0.16px;">1.64</span>
<span class="t" style="left:1393.5px;top:1143.42px;font-size:14.67px;line-height:19px;color:#111;letter-spacing:-0.04px;">RNA</span>
<span class="t" style="left:1511.5px;top:1143.42px;font-size:14.67px;line-height:19px;color:#111;letter-spacing:-0.16px;">40.00</span>
<span class="t" style="left:468.4px;top:1164.42px;font-size:14.67px;line-height:19px;color:#fff;letter-spacing:-0.16px;">8</span>
<span class="t" style="left:509.5px;top:1164.42px;font-size:14.67px;line-height:19px;color:#fff;letter-spacing:-0.16px;">D09</span>
<span class="t" style="left:610.5px;top:1164.42px;font-size:14.67px;line-height:19px;color:#fff;letter-spacing:-0.04px;">TP-SSV</span>
<span class="t" style="left:715.5px;top:1164.42px;font-size:14.67px;line-height:19px;color:#fff;letter-spacing:-0.16px;">11.10.2024 11:22</span>
<span class="t" style="left:843.5px;top:1164.42px;font-size:14.67px;line-height:19px;color:#fff;letter-spacing:-0.16px;">71.9</span>
<span class="t" style="left:955.5px;top:1164.42px;font-size:14.67px;line-height:19px;color:#fff;letter-spacing:-0.04px;">ng/µl</span>
<span class="t" style="left:1013.5px;top:1164.42px;font-size:14.67px;line-height:19px;color:#fff;letter-spacing:-0.16px;">1.798</span>
<span class="t" style="left:1118.5px;top:1164.42px;font-size:14.67px;line-height:19px;color:#fff;letter-spacing:-0.16px;">0.882</span>
<span class="t" style="left:1223.5px;top:1164.42px;font-size:14.67px;line-height:19px;color:#fff;letter-spacing:-0.16px;">2.04</span>
<span class="t" style="left:1308.5px;top:1164.42px;font-size:14.67px;line-height:19px;color:#fff;letter-spacing:-0.16px;">1.07</span>
<span class="t" style="left:1393.5px;top:1164.42px;font-size:14.67px;line-height:19px;color:#fff;letter-spacing:-0.04px;">RNA</span>
<span class="t" style="left:1511.5px;top:1164.42px;font-size:14.67px;line-height:19px;color:#fff;letter-spacing:-0.16px;">40.00</span>
<div class="b" style="left:0px;top:995px;width:459px;height:5px;background:linear-gradient(180deg,#e6e6e6,#b4b4b4);"></div>
<svg style="left:209px;top:996px" width="40" height="3" viewBox="0 0 40 3"><g fill="#fff"><rect x="0.0" y="0" width="2" height="2"/><rect x="3.3" y="0" width="2" height="2"/><rect x="6.6" y="0" width="2" height="2"/><rect x="9.9" y="0" width="2" height="2"/><rect x="13.2" y="0" width="2" height="2"/><rect x="16.5" y="0" width="2" height="2"/><rect x="19.8" y="0" width="2" height="2"/><rect x="23.1" y="0" width="2" height="2"/><rect x="26.4" y="0" width="2" height="2"/><rect x="29.7" y="0" width="2" height="2"/><rect x="33.0" y="0" width="2" height="2"/><rect x="36.3" y="0" width="2" height="2"/></g><g fill="#8a8a8a"><rect x="0.8" y="0.8" width="1.3" height="1.3"/><rect x="4.1" y="0.8" width="1.3" height="1.3"/><rect x="7.4" y="0.8" width="1.3" height="1.3"/><rect x="10.7" y="0.8" width="1.3" height="1.3"/><rect x="14.0" y="0.8" width="1.3" height="1.3"/><rect x="17.3" y="0.8" width="1.3" height="1.3"/><rect x="20.6" y="0.8" width="1.3" height="1.3"/><rect x="23.9" y="0.8" width="1.3" height="1.3"/><rect x="27.2" y="0.8" width="1.3" height="1.3"/><rect x="30.5" y="0.8" width="1.3" height="1.3"/><rect x="33.8" y="0.8" width="1.3" height="1.3"/><rect x="37.1" y="0.8" width="1.3" height="1.3"/></g></svg>
<div class="b" style="left:0px;top:1000px;width:459px;height:224px;background:#f3f3f3;"></div>
<div class="b" style="left:1px;top:1001.2px;width:457.5px;height:29.3px;background:linear-gradient(180deg,#ffffff,#fbfbfb 70%,#f4f4f4);border:1px solid #cfcfcf;border-radius:3.5px;"></div>
<span class="t" style="left:50px;top:1010.53px;font-size:10px;line-height:13px;color:#0a0a0a;font-weight:bold;font-family:'DejaVu Sans','Liberation Sans',sans-serif;letter-spacing:-0.15px;">Home</span>
<div class="b" style="left:0.8px;top:1033.2px;width:457.7px;height:29.6px;background:#cde2f8;border:1.2px solid #2a64a4;border-radius:3.5px;"></div>
<span class="t" style="left:50px;top:1042.54px;font-size:10px;line-height:13px;color:#0a0a0a;font-weight:bold;font-family:'DejaVu Sans','Liberation Sans',sans-serif;letter-spacing:-0.15px;">Measure Nucleic Acid</span>
<div class="b" style="left:1px;top:1065.3px;width:457.5px;height:29.3px;background:linear-gradient(180deg,#ffffff,#fbfbfb 70%,#f4f4f4);border:1px solid #cfcfcf;border-radius:3.5px;"></div>
<span class="t" style="left:50px;top:1074.63px;font-size:10px;line-height:13px;color:#0a0a0a;font-weight:bold;font-family:'DejaVu Sans','Liberation Sans',sans-serif;letter-spacing:-0.15px;">Reports</span>
<div class="b" style="left:1px;top:1097.4px;width:457.5px;height:29.3px;background:linear-gradient(180deg,#ffffff,#fbfbfb 70%,#f4f4f4);border:1px solid #cfcfcf;border-radius:3.5px;"></div>
<span class="t" style="left:50px;top:1106.74px;font-size:10px;line-height:13px;color:#0a0a0a;font-weight:bold;font-family:'DejaVu Sans','Liberation Sans',sans-serif;letter-spacing:-0.15px;">My Data</span>
<div class="b" style="left:1px;top:1129.3px;width:457.5px;height:29.3px;background:linear-gradient(180deg,#ffffff,#fbfbfb 70%,#f4f4f4);border:1px solid #cfcfcf;border-radius:3.5px;"></div>
<span class="t" style="left:50px;top:1138.63px;font-size:10px;line-height:13px;color:#0a0a0a;font-weight:bold;font-family:'DejaVu Sans','Liberation Sans',sans-serif;letter-spacing:-0.15px;">Oligo Calc</span>
<div class="b" style="left:1px;top:1161.3px;width:457.5px;height:29.3px;background:linear-gradient(180deg,#ffffff,#fbfbfb 70%,#f4f4f4);border:1px solid #cfcfcf;border-radius:3.5px;"></div>
<span class="t" style="left:50px;top:1170.63px;font-size:10px;line-height:13px;color:#0a0a0a;font-weight:bold;font-family:'DejaVu Sans','Liberation Sans',sans-serif;letter-spacing:-0.15px;">Options</span>
<div class="b" style="left:0px;top:1192.5px;width:459.5px;height:31px;background:linear-gradient(180deg,#fdfdfd,#efefef);border:1px solid #8c8c8c;"></div>
<svg style="left:439px;top:1199px" width="12" height="16" viewBox="0 0 12 16"><path d="M1.5 1.5L5 4.5L1.5 7.5M6 1.5L9.5 4.5L6 7.5" stroke="#111" stroke-width="1.2" fill="none"/><path d="M4 11H9L6.5 13.5Z" fill="#111"/></svg>
<div class="b" style="left:0px;top:1224px;width:1920px;height:23px;background:#f0f0f0;border-bottom:1px solid #b9c0cc;"></div>
<div class="b" style="left:460px;top:1224px;width:1460px;height:1px;background:#dcdce4;"></div>
<svg style="left:52px;top:1227px" width="16" height="17" viewBox="0 0 16 17"><path d="M8 0.5L15 3V8.5Q15 13.5 8 16.5Q1 13.5 1 8.5V3Z" fill="#9aa3a8"/><path d="M8 2L13.6 4V8.5Q13.6 12.5 8 15Q2.4 12.5 2.4 8.5V4Z" fill="#3cb46a"/><path d="M4.8 8.6L7.2 10.8L11.2 6.2" stroke="#fff" stroke-width="1.6" fill="none"/></svg>
<span class="t" style="left:1865.3px;top:1227.84px;font-size:12px;line-height:16px;color:#1a1a1a;transform:scaleX(0.875);transform-origin:left center;">TP-SSV</span>
<div class="b" style="left:0px;top:1247px;width:1920px;height:47px;background:linear-gradient(90deg,#dfe9f6 0%,#dae4f6 22%,#d3dbf5 45%,#d6dff6 60%,#dce8f8 80%,#dcebf9 100%);"></div>
<svg style="left:22px;top:1252px" width="26" height="28" viewBox="22 1252 26 28">
<path d="M23.5 1262.5Q27 1262.8 30.8 1260.8Q34.5 1262.8 38.2 1262.5V1273.5Q38.2 1276.5 30.8 1279Q23.5 1276.5 23.5 1273.5Z" fill="#fff" stroke="#2a4a8c" stroke-width="0.9"/>
<path d="M24.3 1263.3Q27.3 1263.4 30.8 1261.7Q34.3 1263.4 37.4 1263.3V1267H24.3Z" fill="#2a4a8c"/>
<circle cx="38" cy="1260" r="7.6" fill="#c42b2b"/></svg>
<span class="t" style="left:24.8px;top:1265.63px;font-size:10px;line-height:13px;color:#d0202a;font-weight:bold;transform:scaleX(0.64);transform-origin:left center;">NFL</span>
<span class="t" style="left:35.6px;top:1253.39px;font-size:11px;line-height:14px;color:#fff;">1</span>
<span class="t" style="left:50.5px;top:1253.54px;font-size:12px;line-height:16px;color:#1a1a1a;transform:scaleX(0.875);transform-origin:left center;">SF - SEA</span>
<span class="t" style="left:50.5px;top:1269.94px;font-size:12px;line-height:16px;color:#5e5e5e;transform:scaleX(0.985);transform-origin:left center;">Game score</span>
<svg style="left:705px;top:1259px" width="23" height="23" viewBox="0 0 23 23"><defs><linearGradient id="gwin" x1="0" y1="0" x2="1" y2="1"><stop offset="0" stop-color="#4cc2f4"/><stop offset="1" stop-color="#0a78d4"/></linearGradient></defs>
<rect x="0" y="0" width="10.8" height="10.8" rx="1" fill="url(#gwin)"/><rect x="12.2" y="0" width="10.8" height="10.8" rx="1" fill="url(#gwin)"/><rect x="0" y="12.2" width="10.8" height="10.8" rx="1" fill="url(#gwin)"/><rect x="12.2" y="12.2" width="10.8" height="10.8" rx="1" fill="url(#gwin)"/></svg>
<div class="b" style="left:742px;top:1254.6px;width:218px;height:31px;background:#f3f6fc;border:1px solid #c4cce0;border-radius:15.5px;"></div>
<svg style="left:751px;top:1260px" width="19" height="19" viewBox="0 0 19 19"><circle cx="8" cy="8" r="5.6" stroke="#1a1a1a" stroke-width="1.6" fill="none"/><path d="M12.2 12.2L16.5 16.5" stroke="#1a1a1a" stroke-width="1.8" stroke-linecap="round"/></svg>
<span class="t" style="left:778px;top:1261.46px;font-size:13.4px;line-height:17px;color:#5a5a5a;transform:scaleX(0.96);transform-origin:left center;">Search</span>
<svg style="left:905px;top:1253px" width="56" height="32" viewBox="905 1253 56 32">
<defs><clipPath id="cpill"><rect x="742" y="1254.6" width="218" height="31" rx="15.5"/></clipPath></defs>
<g clip-path="url(#cpill)" stroke="#b4a4d0" stroke-width="0.75" fill="none"><path d="M939.5 1257.2L962 1256M939.5 1257.2L960 1263M939.5 1257.2L958 1270M939.5 1257.2L955 1275M939.5 1257.2L949 1272.5"/><path d="M944.5 1256.8Q945.5 1261 942.6 1262.6M949.5 1256.6Q951 1264 945.4 1267.2M954.5 1256.4Q956.5 1267 948.2 1271.4M958.6 1258Q960 1270 951.6 1274.6"/></g>
<path d="M909 1268.6L912.8 1270.2L914.6 1267.2L916.4 1270.6L919.2 1270.2L917.6 1273.4L919 1276.6L915.4 1275.6L912.6 1278.4L912.8 1274.4Z" fill="#f2a428"/>
<ellipse cx="931.5" cy="1271.5" rx="10.8" ry="9.2" fill="#e8541e"/><ellipse cx="925.5" cy="1271.5" rx="5" ry="8.6" fill="#ee6a24"/><ellipse cx="937.5" cy="1271.5" rx="5" ry="8.6" fill="#dc4a18"/><ellipse cx="931.5" cy="1271.5" rx="4.6" ry="9.2" fill="#f27a2c"/>
<path d="M930.3 1263Q930.5 1259.5 933.5 1258.5L934.5 1260Q932.8 1261 932.8 1263Z" fill="#4a8a2c"/>
<path d="M925.5 1269L928.5 1267L929 1270.5Z M937.5 1269L934.5 1267L934 1270.5Z" fill="#3a1808"/><path d="M924.5 1273Q931.5 1280 938.5 1273Q935 1275.5 931.5 1275.5Q928 1275.5 924.5 1273Z" fill="#3a1808"/>
</svg>
<svg style="left:973px;top:1258px" width="25" height="24" viewBox="0 0 25 24"><rect x="6.5" y="1" width="18" height="16" rx="2" fill="#fafafa" stroke="#dcdce0" stroke-width="0.6"/><rect x="0.5" y="7" width="18" height="16" rx="2" fill="#2a2a2a"/><rect x="7" y="7.5" width="11" height="9" fill="#b8b8b8"/></svg>
<svg style="left:1060px;top:1257px" width="26" height="26" viewBox="0 0 26 26"><defs><linearGradient id="ged1" x1="0" y1="0" x2="1" y2="1"><stop offset="0" stop-color="#2aa0e8"/><stop offset="1" stop-color="#1460b8"/></linearGradient><linearGradient id="ged2" x1="0" y1="0" x2="1" y2="0"><stop offset="0" stop-color="#2ab6e0"/><stop offset="1" stop-color="#5ad86a"/></linearGradient></defs>
<circle cx="13" cy="13" r="12" fill="url(#ged1)"/><path d="M1.5 11Q3 1 13 1Q24 1.5 25 12Q25 17 20.5 17.5Q16.5 17.5 17 14Q17.5 9 12 8.5Q5 8.5 1.5 14Z" fill="url(#ged2)"/><path d="M9.5 15.5Q9.5 12 13 11.5Q16.5 12 15.5 15Q15 18.5 19 19.5Q22 19.8 23.5 18.5Q21 24.5 14.5 24.8Q9.5 21 9.5 15.5Z" fill="#e6f2fb"/></svg>
<div class="b" style="left:1098px;top:1251px;width:38px;height:38.3px;background:#f0f4fb;border-radius:4px;"></div>
<svg style="left:1105px;top:1258px" width="24" height="24" viewBox="1105 1258 24 24"><defs><linearGradient id="gapp" x1="0" y1="0" x2="1" y2="0"><stop offset="0" stop-color="#9aa8d0"/><stop offset="0.35" stop-color="#c4cee8"/><stop offset="1" stop-color="#6276b4"/></linearGradient></defs>
<rect x="1105.2" y="1258.2" width="23.7" height="23.5" fill="url(#gapp)" stroke="#3c4c90" stroke-width="0.8"/>
<path d="M1110.5 1264L1123.5 1264L1121 1269.5L1123.5 1275L1110.5 1275L1113 1269.5Z" fill="#28327e"/>
<rect x="1107.2" y="1259.5" width="19.6" height="5.2" rx="2.4" fill="#050508"/>
<rect x="1106.4" y="1274.4" width="21" height="5.6" rx="2.6" fill="#050508"/>
<ellipse cx="1116.8" cy="1269.7" rx="2.4" ry="1.3" fill="#dfe6f6"/></svg>
<div class="b" style="left:1109px;top:1286.3px;width:16px;height:2.8px;background:#1668c8;border-radius:1.4px;"></div>
<svg style="left:1149px;top:1258px" width="25" height="25" viewBox="1149 1258 25 25"><defs><linearGradient id="gpal" x1="0" y1="0" x2="0.6" y2="1"><stop offset="0" stop-color="#48c0f0"/><stop offset="1" stop-color="#1480d4"/></linearGradient></defs>
<path d="M1162 1258.6Q1171.6 1259 1172.2 1267Q1172.4 1272 1168 1272.4Q1165.6 1272.6 1165.4 1275Q1165.6 1280.6 1160.6 1281.6Q1158.4 1281.8 1158.6 1279Q1159 1276 1156.4 1276.4Q1150.4 1278 1149.8 1270.6Q1150.4 1259.6 1162 1258.6Z" fill="url(#gpal)"/>
<circle cx="1153.7" cy="1270.4" r="2" fill="#e4502c"/><circle cx="1156.5" cy="1265" r="2" fill="#58c83c"/><circle cx="1161.7" cy="1263.2" r="2" fill="#f8d428"/>
<path d="M1161.4 1271.6L1162.2 1270L1163 1271.6L1164.6 1272.2L1163 1272.8L1162.2 1274.4L1161.4 1272.8L1159.8 1272.2Z" fill="#eaf6ff"/>
<path d="M1166.6 1269H1169L1168.6 1281.6H1166.8Z" fill="#b06a2c"/><path d="M1165.4 1266H1169.8L1169.2 1269.4H1166.2Z" fill="#f0e8dc"/></svg>
<div class="b" style="left:1158px;top:1286.3px;width:6px;height:2.4px;background:#7a8088;border-radius:1.2px;"></div>
<svg style="left:1192px;top:1258px" width="26" height="24" viewBox="1192 1258 26 24"><defs><linearGradient id="gfol" x1="0" y1="0" x2="0" y2="1"><stop offset="0" stop-color="#fddc68"/><stop offset="1" stop-color="#f8c032"/></linearGradient></defs>
<path d="M1192.8 1261Q1192.8 1258.9 1194.8 1258.9H1201L1203.4 1261.4H1215.6Q1217.5 1261.4 1217.5 1263.4V1266H1192.8Z" fill="#e8a818"/>
<path d="M1192.8 1263.4H1217.5V1278Q1217.5 1279.8 1215.7 1279.8H1194.6Q1192.8 1279.8 1192.8 1278Z" fill="url(#gfol)"/>
<path d="M1197.9 1279.8V1276Q1197.9 1274 1199.9 1274H1210.1Q1212.1 1274 1212.1 1276V1279.8Z" fill="#1a7ad4"/></svg>
<div class="b" style="left:1202px;top:1286.3px;width:6px;height:2.4px;background:#7a8088;border-radius:1.2px;"></div>
<svg style="left:1689px;top:1265px" width="13" height="9" viewBox="0 0 13 9"><path d="M1.5 7L6.5 2L11.5 7" stroke="#1a1a1a" stroke-width="1.4" fill="none"/></svg>
<span class="t" style="left:1721.5px;top:1263.14px;font-size:12px;line-height:16px;color:#1a1a1a;transform:scaleX(0.875);transform-origin:left center;">ENG</span>
<svg style="left:1762px;top:1261px" width="18" height="18" viewBox="0 0 18 18"><g stroke="#1a1a1a" stroke-width="1.1" fill="none"><rect x="1" y="2" width="11.5" height="10.5" rx="1"/><path d="M4.5 16.5H12M7 12.5V16.5"/><rect x="11.5" y="1" width="4.5" height="6" rx="1.2" fill="#dce8f8"/><path d="M12.5 3H15M14 7V16.5H11"/></g></svg>
<svg style="left:1786px;top:1262px" width="18" height="15" viewBox="0 0 18 15"><g stroke="#1a1a1a" stroke-width="1.1" fill="none"><path d="M1 5.2H3.5L7 2V13L3.5 9.8H1Z"/><path d="M9.5 5Q11 7.5 9.5 10M11.8 3.3Q14.3 7.5 11.8 11.7M14.1 1.6Q17.8 7.5 14.1 13.4"/></g></svg>
<span class="t" style="left:1800px;top:1254.04px;font-size:12px;line-height:16px;color:#1a1a1a;width:77px;text-align:right;transform:scaleX(0.96);transform-origin:right center;">11:22</span>
<span class="t" style="left:1800px;top:1269.54px;font-size:12px;line-height:16px;color:#1a1a1a;width:77px;text-align:right;letter-spacing:-0.15px;">11.10.2024</span>
<svg style="left:1884px;top:1262px" width="16" height="17" viewBox="0 0 16 17"><path d="M8 1Q12.8 1 12.8 6.5V10L14.8 12.8H1.2L3.2 10V6.5Q3.2 1 8 1Z" fill="#0b4fae"/><path d="M5.8 14.2H10.2Q9.6 16 8 16Q6.4 16 5.8 14.2Z" fill="#0b4fae"/></svg>
<svg style="left:0;top:1000px" width="44" height="192" viewBox="0 1000 44 192">
<!-- home -->
<g transform="translate(0,1.4)">
<path d="M9.1 1019.5L19.5 1026.8L24.4 1025L14 1017.6Z" fill="#1c6fa6"/>
<path d="M14.3 1010.2L18.4 1006L22.6 1013.3V1025.5L14.3 1020.6Z" fill="#3d9bd6"/>
<path d="M16.2 1013.6L19 1015V1018.6L16.2 1017.2Z" fill="#1a5a90"/>
<path d="M22.6 1013.3L36.9 1010.4V1020.8L22.6 1025.5Z" fill="#f2f5f8"/>
<path d="M22.6 1021L36.9 1017.4V1020.8L22.6 1025.5Z" fill="#d4dde6"/>
<path d="M28.4 1014.6L32 1013.9V1022.3L28.4 1023.5Z" fill="#1c5f96"/>
<path d="M17.2 1002.6H20.4V1005.6H17.2Z" fill="#c87a20"/>
<path d="M17.7 1004.5L33 1004.2L38.1 1010.3L22.8 1013.9Z" fill="#e8922a"/>
<path d="M17.7 1004.5L12.2 1009.8L13.4 1011L18.4 1006.3L22.8 1013.9L23.6 1012.6Z" fill="#a8600f"/>
</g>
<!-- tape measure -->
<path d="M12 1054Q16 1058 22 1055.5L21 1051Q16 1053.5 12.5 1050Z" fill="#1e1e1e"/>
<ellipse cx="18.4" cy="1045.4" rx="7.6" ry="9.8" fill="#c8ccd0"/>
<ellipse cx="16.6" cy="1045.2" rx="6.6" ry="9.4" fill="#eceef0"/>
<ellipse cx="15.6" cy="1045.6" rx="3.6" ry="6.4" fill="#b8bcc2"/>
<ellipse cx="16.2" cy="1046" rx="2.6" ry="5.2" fill="#f4f5f6"/>
<path d="M21.2 1040.4L25.6 1039.6L26.8 1046.6L22.4 1047.6Z" fill="#f0b428"/>
<path d="M20 1052.4L25 1050.2L37.4 1056.4L33 1059.2Z" fill="#f4d44c"/>
<path d="M23 1052.6L25.4 1051.5M26 1054.2L28.4 1053M29 1055.8L31.4 1054.6" stroke="#b89018" stroke-width="0.6"/>
<path d="M33 1059.2L37.4 1056.4L37.8 1058.6L33.4 1061.2L31.8 1060.4Z" fill="#d4d8dc"/>
<!-- reports -->
<rect x="15" y="1068" width="15" height="20.6" rx="1" fill="#d42034"/>
<rect x="20" y="1072" width="16.8" height="19.2" rx="1" fill="#ec3044"/>
<rect x="25" y="1077" width="7.2" height="3.6" rx="0.6" fill="#fff" stroke="#a01828" stroke-width="0.5"/>
<path d="M13.4 1070.5H16M13.4 1073.5H16M13.4 1076.5H16M13.4 1079.5H16M13.4 1082.5H16M13.4 1085.5H16M18.4 1075H21M18.4 1078H21M18.4 1081H21M18.4 1084H21M18.4 1087H21M18.4 1090H21" stroke="#3a0a10" stroke-width="1"/>
<path d="M35 1073V1091" stroke="#b01828" stroke-width="1.4"/>
<!-- my data -->
<path d="M11.4 1119L18 1123.8L21 1121L15 1117Z" fill="#2a3038"/>
<path d="M14.8 1100L18.6 1102V1123L14.8 1119.6Z" fill="#5a6678"/>
<path d="M14.8 1100L29.4 1099L33.2 1101L18.6 1102Z" fill="#8a96a8"/>
<path d="M18.6 1102L33.2 1101V1111L18.6 1112Z" fill="#a4b0c2"/>
<rect x="23.4" y="1103.6" width="5" height="2" fill="#eef0f4"/>
<path d="M22.4 1108L33 1106.6L35 1111.6L23.4 1113Z" fill="#f4d050"/>
<path d="M20.6 1112.6L37 1111.4V1123L20.6 1124Z" fill="#9aa6ba"/>
<path d="M18.6 1112L20.6 1112.6V1124L18.6 1123Z" fill="#6a7688"/>
<rect x="26.4" y="1115.4" width="5.4" height="2.2" fill="#eef0f4"/>
<rect x="26.8" y="1119.4" width="4.4" height="1.2" fill="#6a7688"/>
<!-- oligo calc -->
<path d="M27.4 1130Q36 1134 28.4 1139Q36.4 1144 28.4 1149Q36.4 1153.6 27.4 1158" stroke="#e8641c" stroke-width="2.4" fill="none"/>
<path d="M37.4 1130Q28.6 1134 36.4 1139Q28.4 1144 36.4 1149Q28.4 1153.6 37.4 1158" stroke="#f07a28" stroke-width="2.4" fill="none"/>
<path d="M30 1131.6H35M30 1136H35M30 1142H35M30 1146.4H35M30 1152H35M30 1156H35" stroke="#2a5a9c" stroke-width="1"/>
<path d="M9 1139L24.6 1131.4L34.6 1149.2L19 1156.4Z" fill="#4a86d0"/>
<path d="M9 1139L19 1156.4L19.6 1158L9.4 1141Z" fill="#1c4a9c"/>
<path d="M19 1156.4L34.6 1149.2L35 1150.8L19.6 1158Z" fill="#2a5cae"/>
<path d="M13.4 1138.6L23.4 1133.8L25 1136.6L15 1141.4Z" fill="#e4eef8"/>
<g fill="#e8f0fa"><path d="M16 1144.2L18 1143.2L19 1145L17 1146Z"/><path d="M19.4 1142.6L21.4 1141.6L22.4 1143.4L20.4 1144.4Z"/><path d="M22.8 1141L24.8 1140L25.8 1141.8L23.8 1142.8Z"/><path d="M17.8 1147.4L19.8 1146.4L20.8 1148.2L18.8 1149.2Z"/><path d="M21.2 1145.8L23.2 1144.8L24.2 1146.6L22.2 1147.6Z"/><path d="M24.6 1144.2L26.6 1143.2L27.6 1145L25.6 1146Z"/><path d="M19.6 1150.6L21.6 1149.6L22.6 1151.4L20.6 1152.4Z"/><path d="M23 1149L25 1148L26 1149.8L24 1150.8Z"/><path d="M26.4 1147.4L28.4 1146.4L29.4 1148.2L27.4 1149.2Z"/></g>
<!-- options -->
<rect x="12.4" y="1167.4" width="18" height="16.6" fill="#b8d4ec" stroke="#5a8ab8" stroke-width="0.8"/>
<rect x="14.6" y="1169.6" width="13.6" height="12.2" fill="#dcebf8"/>
<circle cx="17.4" cy="1166.4" r="3" fill="#cfe4f6" stroke="#6a9ac4" stroke-width="0.8"/>
<circle cx="17.4" cy="1185.4" r="3" fill="#cfe4f6" stroke="#6a9ac4" stroke-width="0.8"/>
<circle cx="17.6" cy="1176" r="3.4" fill="#2ea83c" stroke="#1a7a28" stroke-width="0.6"/>
<circle cx="16.6" cy="1175" r="1.2" fill="#b8ecb8"/>
<path d="M20.6 1172.4L23.6 1171.2L25.6 1175.4Q30 1168 37.2 1165L36.4 1168.6Q29.6 1173 25.4 1180.6Z" fill="#e0141c"/>
</svg>
</body></html>
